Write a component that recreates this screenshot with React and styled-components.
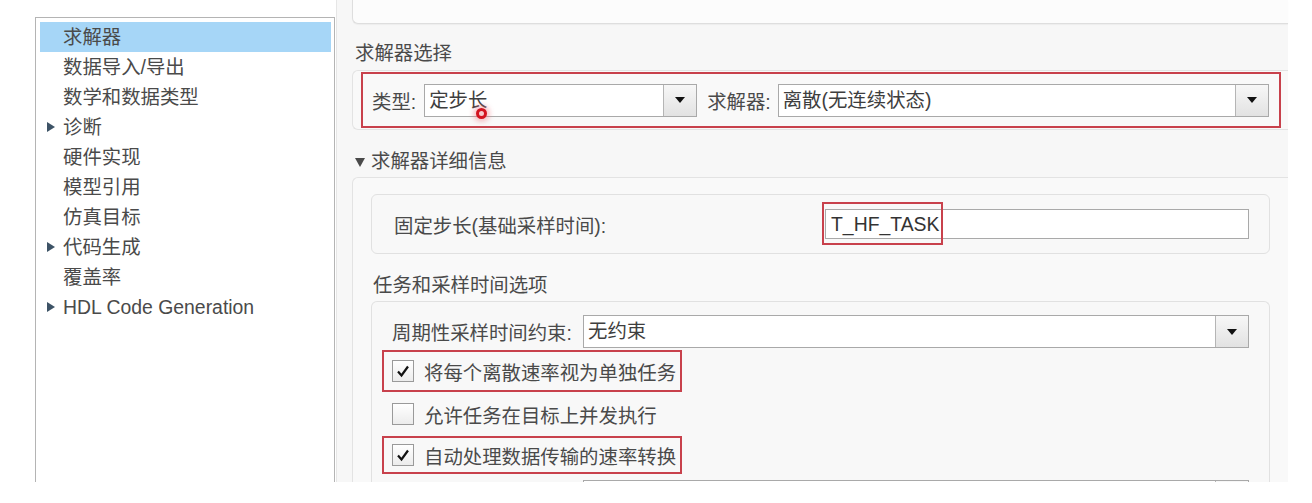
import React from "react";
import styled, { createGlobalStyle } from "styled-components";

const GlobalStyle = createGlobalStyle`
    body {
        margin: 0;
        background: #ffffff;
        font-family: "Liberation Sans", "Noto Sans CJK SC", sans-serif;
        color: #4a4a4a;
    }
`;

const treeItems = [
    { label: "求解器", selected: true },
    { label: "数据导入/导出" },
    { label: "数学和数据类型" },
    { label: "诊断", expandable: true },
    { label: "硬件实现" },
    { label: "模型引用" },
    { label: "仿真目标" },
    { label: "代码生成", expandable: true },
    { label: "覆盖率" },
    { label: "HDL Code Generation", expandable: true },
];

function Select({ value, width, children }) {
    return (
        <SelectBox $width={width}>
            <SelectValue>{value}</SelectValue>
            <SelectButton>
                <Caret />
            </SelectButton>
            {children}
        </SelectBox>
    );
}

function Check({ checked, marked, height, label }) {
    return (
        <CheckRow $marked={marked} $height={height}>
            <CheckBox>
                {checked && (
                    <svg width="16" height="16" viewBox="0 0 16 16">
                        <path d="M3 8.5 L6.5 12.5 L13 3.5" fill="none" stroke="#111" strokeWidth="2.2" />
                    </svg>
                )}
            </CheckBox>
            <CheckLabel>{label}</CheckLabel>
        </CheckRow>
    );
}

function App() {
    return (
        <>
            <GlobalStyle />
            <Page>
                <Tree>
                    {treeItems.map((item) => (
                        <TreeRow key={item.label} $selected={item.selected}>
                            {item.expandable && <TreeArrow />}
                            {item.label}
                        </TreeRow>
                    ))}
                </Tree>

                <Pane>
                    <TopPanel />

                    <SectionTitle>求解器选择</SectionTitle>
                    <SolverPanel>
                        <Marked>
                            <FieldLabel>类型:</FieldLabel>
                            <Select value="定步长" width="273px">
                                <CursorDot />
                            </Select>
                            <FieldLabel $gap>求解器:</FieldLabel>
                            <Select value="离散(无连续状态)" />
                        </Marked>
                    </SolverPanel>

                    <CollapseHeader>
                        <DownArrow />
                        求解器详细信息
                    </CollapseHeader>
                    <DetailPanel>
                        <InnerPanel $pad="14px 20px 14px 22px">
                            <StepLabel>固定步长(基础采样时间):</StepLabel>
                            <TextInput>
                                T_HF_TASK
                                <InputMark />
                            </TextInput>
                        </InnerPanel>

                        <SubTitle>任务和采样时间选项</SubTitle>
                        <OptionsPanel>
                            <OptionRow>
                                <OptionLabel>周期性采样时间约束:</OptionLabel>
                                <Select value="无约束" />
                            </OptionRow>
                            <Check checked marked height="42px" label="将每个离散速率视为单独任务" />
                            <Check height="40px" label="允许任务在目标上并发执行" />
                            <Check checked marked height="38px" label="自动处理数据传输的速率转换" />
                            <OptionRow $top="6px">
                                <OptionLabel />
                                <Select value="" />
                            </OptionRow>
                        </OptionsPanel>
                    </DetailPanel>
                </Pane>
            </Page>
        </>
    );
}

const Page = styled.div`
    display: flex;
    height: 482px;
    overflow: hidden;
    padding-left: 35px;
    font-size: 19.4px;
`;

const Tree = styled.div`
    flex: 0 0 300px;
    box-sizing: border-box;
    margin-top: 17px;
    padding: 4px 3px 0 4px;
    border: 1px solid #b4b4b4;
    border-bottom: none;
    background: #ffffff;
`;

const TreeRow = styled.div`
    position: relative;
    height: 30px;
    line-height: 30px;
    padding-left: 23px;
    color: #4a4a4a;
    white-space: nowrap;
    background: ${(p) => (p.$selected ? "#a6d6f7" : "transparent")};
`;

const TreeArrow = styled.span`
    position: absolute;
    left: 7px;
    top: 10px;
    width: 0;
    height: 0;
    border-top: 5px solid transparent;
    border-bottom: 5px solid transparent;
    border-left: 8px solid #3d5366;
`;

const Pane = styled.div`
    flex: 0 0 952px;
    box-sizing: border-box;
    padding-left: 15px;
    background: #f7f7f7;
    border-left: 1px solid #e6e6e6;
    margin-left: 1px;
`;

const TopPanel = styled.div`
    height: 23px;
    background: #fcfcfc;
    border: 1px solid #dedede;
    border-top: none;
    border-right: none;
    border-bottom-left-radius: 6px;
    box-shadow: 0 1px 1px rgba(0, 0, 0, 0.04);
`;

const SectionTitle = styled.div`
    margin: 18px 0 6px 3px;
    line-height: 22px;
`;

const SolverPanel = styled.div`
    padding: 1px 7px 1px 8px;
    border: 1px solid #e3e3e3;
    border-right: none;
    border-radius: 6px 0 0 6px;
    background: #f9f9f9;
`;

const Marked = styled.div`
    display: flex;
    align-items: center;
    box-sizing: border-box;
    height: 56px;
    padding: 0 10px 0 9px;
    border: 2px solid #c8414c;
`;

const FieldLabel = styled.span`
    margin: ${(p) => (p.$gap ? "0 7px 0 10px" : "0 8px 0 0")};
    white-space: nowrap;
`;

const SelectBox = styled.div`
    position: relative;
    display: flex;
    box-sizing: border-box;
    flex: ${(p) => (p.$width ? `0 0 ${p.$width}` : "1")};
    height: 33px;
    border: 1px solid #a9a9a9;
    background: #ffffff;
`;

const SelectValue = styled.div`
    flex: 1;
    padding-left: 4px;
    line-height: 31px;
    color: #3e3e3e;
    white-space: nowrap;
`;

const SelectButton = styled.div`
    display: flex;
    align-items: center;
    justify-content: center;
    width: 32px;
    border-left: 1px solid #b5b5b5;
    background: linear-gradient(#f7f7f7, #e2e2e2);
`;

const Caret = styled.span`
    width: 0;
    height: 0;
    border-left: 5px solid transparent;
    border-right: 5px solid transparent;
    border-top: 6px solid #111111;
`;

const CursorDot = styled.span`
    position: absolute;
    left: 51px;
    top: 23px;
    width: 5px;
    height: 5px;
    border: 3px solid #d3121f;
    border-radius: 50%;
    background: #f6c9cc;
    box-shadow: 0 0 5px 3px rgba(240, 120, 130, 0.45);
`;

const CollapseHeader = styled.div`
    display: flex;
    align-items: center;
    margin: 20px 0 5px 3px;
    line-height: 22px;
`;

const DownArrow = styled.span`
    width: 0;
    height: 0;
    margin: 2px 6px 0 0;
    border-left: 5px solid transparent;
    border-right: 5px solid transparent;
    border-top: 9px solid #4a4a4a;
`;

const DetailPanel = styled.div`
    height: 400px;
    padding: 16px 18px 0 18px;
    border: 1px solid #e3e3e3;
    border-right: none;
    border-radius: 6px 0 0 0;
    background: #f9f9f9;
`;

const InnerPanel = styled.div`
    display: flex;
    align-items: center;
    padding: ${(p) => p.$pad};
    border: 1px solid #e1e1e1;
    border-radius: 6px;
    background: #f8f8f8;
`;

const StepLabel = styled.span`
    flex: 0 0 431px;
    white-space: nowrap;
`;

const TextInput = styled.div`
    position: relative;
    flex: 1;
    box-sizing: border-box;
    height: 30px;
    padding-left: 5px;
    line-height: 28px;
    border: 1px solid #a9a9a9;
    background: #ffffff;
    color: #333333;
`;

const InputMark = styled.span`
    position: absolute;
    left: -4px;
    top: -8px;
    width: 117px;
    height: 39px;
    border: 2px solid #c8414c;
`;

const SubTitle = styled.div`
    margin: 20px 0 5px 2px;
    line-height: 22px;
`;

const OptionsPanel = styled.div`
    height: 300px;
    padding: 13px 20px 0 20px;
    border: 1px solid #e1e1e1;
    border-bottom: none;
    border-radius: 6px 6px 0 0;
    background: #f8f8f8;
`;

const OptionRow = styled.div`
    display: flex;
    align-items: center;
    margin-top: ${(p) => p.$top || "0"};
`;

const OptionLabel = styled.span`
    flex: 0 0 191px;
    white-space: nowrap;
`;

const CheckRow = styled.div`
    display: flex;
    align-items: center;
    box-sizing: border-box;
    width: fit-content;
    height: ${(p) => p.$height};
    margin: 2px 0 0 -10px;
    padding: 0 4px 0 8px;
    border: 2px solid ${(p) => (p.$marked ? "#c8414c" : "transparent")};
`;

const CheckBox = styled.span`
    display: flex;
    align-items: center;
    justify-content: center;
    box-sizing: border-box;
    width: 22px;
    height: 22px;
    border: 1px solid #9a9a9a;
    background: linear-gradient(#ffffff, #ececec);
`;

const CheckLabel = styled.span`
    margin-left: 10px;
    white-space: nowrap;
`;

export default App;
